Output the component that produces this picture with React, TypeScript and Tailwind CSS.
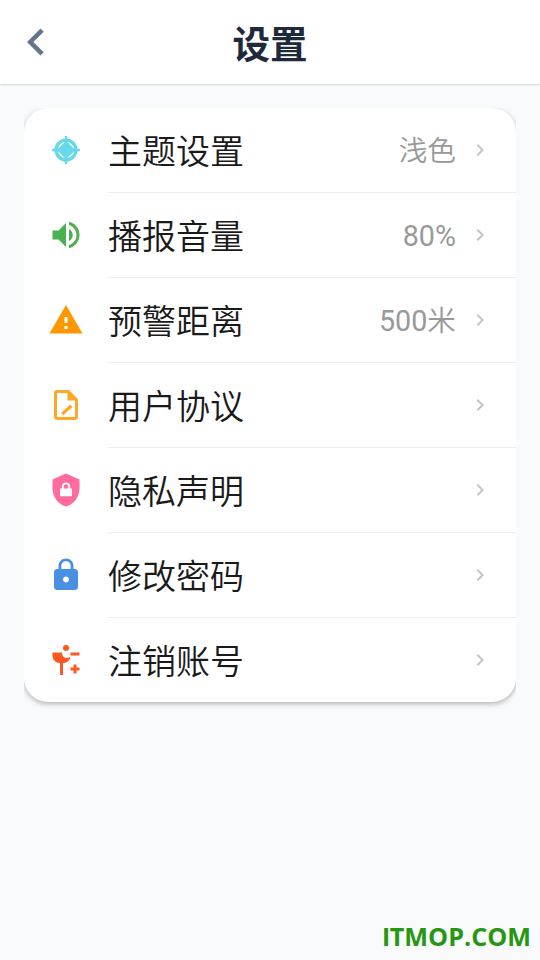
import type { ReactNode } from 'react';

type Item = { label: string; amount?: string; unit?: string; color: string; icon: ReactNode };

const items: Item[] = [
  {
    label: '主题设置',
    unit: '浅色',
    color: 'text-[#66d9e8]',
    icon: (
      <>
        <circle cx="12" cy="12" r="6.600" fill="none" stroke="currentColor" strokeWidth="2.300" />
        <path d="M11.200 2.700h1.600v4l4.500 4.500h4v1.600h-4l-4.500 4.500v4h-1.600v-4l-4.500-4.500h-4v-1.600h4l4.500-4.500z" />
      </>
    ),
  },
  {
    label: '播报音量',
    amount: '80%',
    color: 'text-[#4caf50]',
    icon: (
      <path d="M3 9v6h4l5 5V4L7 9H3zm13.5 3c0-1.77-1.02-3.29-2.5-4.03v8.05c1.48-.73 2.5-2.25 2.5-4.02zM14 3.23v2.06c2.89.86 5 3.54 5 6.71s-2.11 5.85-5 6.71v2.06c4.01-.91 7-4.49 7-8.77s-2.99-7.86-7-8.77z" />
    ),
  },
  {
    label: '预警距离',
    amount: '500',
    unit: '米',
    color: 'text-[#ff9800]',
    icon: <path d="M1 21h22L12 2 1 21zm12-3h-2v-2h2v2zm0-4h-2v-4h2v4z" />,
  },
  {
    label: '用户协议',
    color: 'text-[#ffa726]',
    icon: (
      <>
        <path d="M14 2H6c-1.1 0-2 .9-2 2v16c0 1.1.9 2 2 2h12c1.1 0 2-.9 2-2V8l-6-6zM6 20V4h7v5h5v11H6z" />
        <path d="M9.400 18.100l6.200-5.600" fill="none" stroke="currentColor" strokeWidth="2.200" />
      </>
    ),
  },
  {
    label: '隐私声明',
    color: 'text-[#ff6b9d]',
    icon: (
      <>
        <path d="M12 1L3 5v6c0 5.55 3.84 10.74 9 12 5.16-1.26 9-6.45 9-12V5l-9-4z" />
        <path
          fill="#fff"
          d="M8 11h1.2V9.5C9.2 8.1 10.6 7 12 7s2.8 1.1 2.8 2.5V11H16v5.2H8V11zm2.5 0h3V9.5c0-.8-.7-1.3-1.5-1.3s-1.5.5-1.5 1.3V11z"
        />
      </>
    ),
  },
  {
    label: '修改密码',
    color: 'text-[#4a90e2]',
    icon: (
      <path d="M18 8h-1V6c0-2.76-2.24-5-5-5S7 3.24 7 6v2H6c-1.1 0-2 .9-2 2v10c0 1.1.9 2 2 2h12c1.1 0 2-.9 2-2V10c0-1.1-.9-2-2-2zm-6 9c-1.1 0-2-.9-2-2s.9-2 2-2 2 .9 2 2-.9 2-2 2zm3.1-9H8.9V6c0-1.71 1.39-3.1 3.1-3.1 1.71 0 3.1 1.39 3.1 3.1v2z" />
    ),
  },
  {
    label: '注销账号',
    color: 'text-[#ff5722]',
    icon: (
      <>
        <circle cx="12" cy="4" r="2" />
        <path d="M15 7h6v2h-6zM3 7h6.300c0 2 1.100 3.600 3 3.600 1 0 1.700-.3 2.700-.8-.4 2.200-2.300 4.200-5 4.200v8H8v-8c-3 0-5-2.300-5-5z" />
        <path d="M17 15h2v2h2v2h-2v2h-2v-2h-2v-2h2z" />
      </>
    ),
  },
];

function Row({ item, last }: { item: Item; last: boolean }) {
  return (
    <li className="flex pl-6">
      <svg viewBox="0 0 24 24" fill="currentColor" className={`mt-6 mr-6 size-9 shrink-0 ${item.color}`}>
        {item.icon}
      </svg>
      <div
        className={`flex flex-1 items-center pr-6 ${last ? 'h-[84px]' : 'h-[85px] border-b border-[#ececec]'}`}
      >
        <span className="flex-1 pb-px font-['Noto_Sans_CJK_SC',sans-serif] text-[34px] leading-[50px] font-[350] text-[#1a1a1a]">
          {item.label}
        </span>
        {(item.amount || item.unit) && (
          <span className="mr-3 pt-px text-[28.700px] leading-[42px] text-[#999]">
            {item.amount}
            <span className="font-[350]">{item.unit}</span>
          </span>
        )}
        <svg viewBox="0 0 24 24" fill="#c4c4c4" className="size-6">
          <path d="M8.590 16.590L13.170 12 8.590 7.410 10 6l6 6-6 6z" />
        </svg>
      </div>
    </li>
  );
}

export default function App() {
  return (
    <div className="flex h-[960px] w-[540px] flex-col overflow-hidden bg-[#f8fafc] font-[Roboto,'Noto_Sans_CJK_SC',sans-serif]">
      <header className="grid h-[84px] shrink-0 grid-cols-[72px_1fr_72px] items-center bg-white shadow-[0_1px_2px_rgba(0,0,0,0.14)]">
        <svg viewBox="0 0 24 24" fill="#64748b" className="ml-[9px] size-[54px]">
          <path d="M15.410 7.410L14 6l-6 6 6 6 1.410-1.410L10.830 12z" />
        </svg>
        <h1 className="pt-[5px] text-center text-[37.5px] leading-[54px] font-bold text-[#1e293b]">设置</h1>
      </header>
      <main className="mx-6 mt-6 overflow-hidden pb-4">
        <ul className="rounded-3xl bg-white shadow-[0_2px_4px_rgba(0,0,0,0.2),0_2px_8px_rgba(0,0,0,0.1)]">
          {items.map((item, i) => (
            <Row key={item.label} item={item} last={i === items.length - 1} />
          ))}
        </ul>
      </main>
      <footer className="mt-auto mr-[9px] mb-[6px] text-right font-['Open_Sans',sans-serif] text-[25.200px] leading-9 font-bold text-[#279612]">
        <span className="font-['Lato',sans-serif] font-black">I</span>TMOP.COM
      </footer>
    </div>
  );
}
